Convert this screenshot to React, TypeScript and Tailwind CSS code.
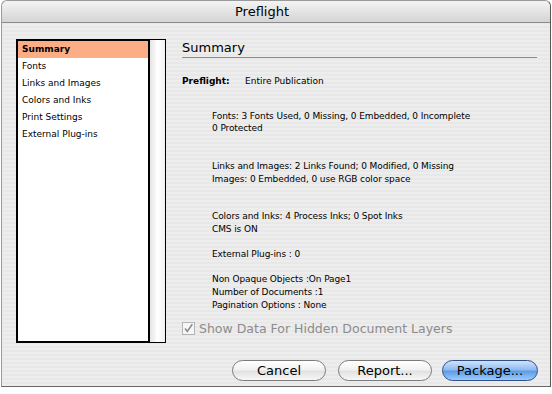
import React from "react";

const items = ["Summary", "Fonts", "Links and Images", "Colors and Inks", "Print Settings", "External Plug-ins"];

const blocks: { lines: string[]; gap: string }[] = [
  { lines: ["Fonts: 3 Fonts Used, 0 Missing, 0 Embedded, 0 Incomplete", "0 Protected"], gap: "mt-[21px]" },
  { lines: ["Links and Images: 2 Links Found; 0 Modified, 0 Missing", "Images: 0 Embedded, 0 use RGB color space"], gap: "mt-[25px]" },
  { lines: ["Colors and Inks: 4 Process Inks; 0 Spot Inks", "CMS is ON"], gap: "mt-[25px]" },
  { lines: ["External Plug-ins : 0"], gap: "mt-[12px]" },
  { lines: ["Non Opaque Objects :On Page1", "Number of Documents :1", "Pagination Options : None"], gap: "mt-[13px]" },
];

function Button({ label, primary }: { label: string; primary?: boolean }) {
  return (
    <button
      className={
        primary
          ? "w-[96px] h-[21px] rounded-full border border-[#2f4f86] bg-[linear-gradient(#cfe3fb,#8fbcf1_45%,#5d9de8_55%,#9ccbff)] text-[13px] text-black leading-none"
          : "w-[94px] h-[21px] rounded-full border border-[#7b7b7b] bg-[linear-gradient(#ffffff,#f2f2f2_45%,#e2e2e2_55%,#f7f7f7)] text-[13px] text-black leading-none"
      }
    >
      {label}
    </button>
  );
}

export default function App() {
  return (
    <div className="w-[552px] h-[394px] bg-white overflow-hidden font-['DejaVu_Sans',sans-serif]">
      <div className="w-[550px] h-[387px] ml-[1px] flex flex-col rounded-t-[6px] border border-[#9a9a9a] border-r-[#555] border-b-[#666] bg-[repeating-linear-gradient(0deg,#ededed_0px,#ededed_2px,#e8e8e8_2px,#e8e8e8_4px)]">
        <div className="h-[22px] shrink-0 rounded-t-[6px] border-b border-[#8c8c8c] bg-[linear-gradient(#f4f4f4,#d4d4d4)] flex items-center justify-center pr-[28px] text-[13px] text-black">
          Preflight
        </div>

        <div className="flex">
          {/* list */}
          <div className="ml-[14px] mt-[16px] h-[304px] flex">
            <div className="w-[134px] border-2 border-black bg-white">
              {items.map((it, i) => (
                <div
                  key={it}
                  className={
                    i === 0
                      ? "h-[17px] pl-[4px] flex items-center bg-[#fbad86] font-bold text-[9px] text-black"
                      : "h-[17px] pl-[4px] flex items-center text-[9px] text-black"
                  }
                >
                  {it}
                </div>
              ))}
            </div>
            <div className="w-[16px] border border-l-0 border-black bg-[linear-gradient(90deg,#e4e4e4,#ffffff_50%,#f0f0f0)]" />
          </div>

          {/* right panel */}
          <div className="ml-[16px] mt-[17px] w-[355px] flex flex-col text-[9px] text-black">
            <div className="text-[13px] leading-[15px] border-b border-[#8a8a8a] pb-[2px]">Summary</div>
            <div className="mt-[17px] flex">
              <span className="font-bold w-[63px]">Preflight:</span>
              <span>Entire Publication</span>
            </div>
            <div className="pl-[30px] tracking-[-0.1px]">
              {blocks.map((b, i) => (
                <div key={i} className={b.gap}>
                  {b.lines.map((l) => (
                    <div key={l} className="leading-[12.7px]">
                      {l}
                    </div>
                  ))}
                </div>
              ))}
            </div>
            <div className="mt-[8px] flex items-center gap-[4px] text-[12.5px] text-[#8c8c8c]">
              <div className="w-[13px] h-[13px] border border-[#b5b5b5] bg-[#f6f6f6] flex items-center justify-center">
                <svg width="13" height="13" viewBox="0 0 13 13">
                  <path d="M2.5 6.5 L5 10 L11 1.5" fill="none" stroke="#8a8a8a" strokeWidth="1.8" />
                </svg>
              </div>
              <span>Show Data For Hidden Document Layers</span>
            </div>
          </div>
        </div>

        <div className="mt-[17px] flex justify-end pr-[12px]">
          <Button label="Cancel" />
          <div className="w-[12px]" />
          <Button label="Report..." />
          <div className="w-[10px]" />
          <Button label="Package..." primary />
        </div>
      </div>
    </div>
  );
}
